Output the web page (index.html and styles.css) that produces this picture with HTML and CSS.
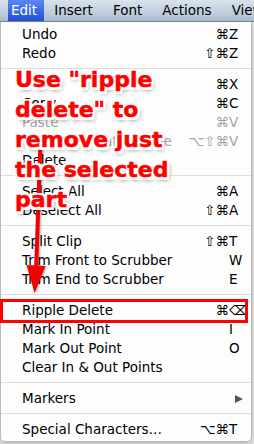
FILE: index.html
```html
<!DOCTYPE html>
<html lang="en">
<head>
    <meta charset="UTF-8">
    <title>Edit menu</title>
    <link rel="stylesheet" href="styles.css">
</head>
<body>
    <div class="menubar">
        <span class="title active">Edit</span>
        <span class="title">Insert</span>
        <span class="title">Font</span>
        <span class="title">Actions</span>
        <span class="title">View</span>
    </div>

    <div class="menu">
        <div class="item"><span>Undo</span><span class="keys"><span>⌘</span><span class="key">Z</span></span></div>
        <div class="item"><span>Redo</span><span class="keys"><span>⇧⌘</span><span class="key">Z</span></span></div>
        <div class="separator"></div>
        <div class="item"><span>Cut</span><span class="keys"><span>⌘</span><span class="key">X</span></span></div>
        <div class="item"><span>Copy</span><span class="keys"><span>⌘</span><span class="key">C</span></span></div>
        <div class="item disabled"><span>Paste</span><span class="keys"><span>⌘</span><span class="key">V</span></span></div>
        <div class="item disabled"><span>Paste and Match Style</span><span class="keys"><span>⌥⇧⌘</span><span class="key">V</span></span></div>
        <div class="item"><span>Delete</span></div>
        <div class="separator"></div>
        <div class="item"><span>Select All</span><span class="keys"><span>⌘</span><span class="key">A</span></span></div>
        <div class="item"><span>Deselect All</span><span class="keys"><span>⇧⌘</span><span class="key">A</span></span></div>
        <div class="separator"></div>
        <div class="item"><span>Split Clip</span><span class="keys"><span>⇧⌘</span><span class="key">T</span></span></div>
        <div class="item"><span>Trim Front to Scrubber</span><span class="keys"><span class="key">W</span></span></div>
        <div class="item"><span>Trim End to Scrubber</span><span class="keys"><span class="key">E</span></span></div>
        <div class="separator"></div>
        <div class="item"><span>Ripple Delete</span><span class="keys"><span>⌘</span><span class="key">⌫</span></span></div>
        <div class="item"><span>Mark In Point</span><span class="keys"><span class="key">I</span></span></div>
        <div class="item"><span>Mark Out Point</span><span class="keys"><span class="key">O</span></span></div>
        <div class="item"><span>Clear In &amp; Out Points</span></div>
        <div class="separator"></div>
        <div class="item"><span>Markers</span><span class="submenu"></span></div>
        <div class="separator"></div>
        <div class="item"><span>Special Characters…</span><span class="keys"><span>⌥⌘</span><span class="key">T</span></span></div>
    </div>

    <!-- annotation drawn on top of the screenshot -->
    <svg class="arrow" width="60" height="300" viewBox="0 0 60 300">
        <line x1="40.5" y1="140" x2="36.2" y2="268" stroke="#f20000" stroke-width="4"/>
        <polygon points="26.5,265 45.5,266 34.6,293" fill="#f20000"/>
    </svg>
    <div class="note">Use "ripple<br>delete" to<br>remove just<br>the selected<br>part</div>
    <div class="highlight"></div>
</body>
</html>
```

FILE: styles.css
```css
body {
    margin: 0;
    width: 254px;
    height: 444px;
    overflow: hidden;
    position: relative;
    background-color: #ececec;
    font-family: "DejaVu Sans", sans-serif;
    font-size: 13.5px;
    color: #000;
}

.menubar {
    display: flex;
    height: 21px;
    padding-left: 8px;
    border-bottom: 1px solid #7d8b99;
    background: linear-gradient(#d9e3ec, #adbfd1);
    white-space: nowrap;
    overflow: hidden;
}

.title {
    line-height: 21px;
    padding: 0 10px;
}

.title.active {
    padding: 0 7px 0 3px;
    color: #fff;
    background: linear-gradient(#5a89f2, #1f4fd8);
}

.menu {
    width: 252px;
    box-sizing: border-box;
    padding: 3px 0 2px;
    background-color: #fdfdfd;
    border: 1px solid #b9b9b9;
    border-top: none;
    border-radius: 0 0 5px 5px;
    box-shadow: 0 3px 8px rgba(0, 0, 0, 0.25);
}

.item {
    display: flex;
    justify-content: space-between;
    align-items: center;
    height: 19px;
    line-height: 19px;
    padding: 0 10px 0 21px;
    white-space: nowrap;
}

.item.disabled {
    color: #a3a3a3;
}

.keys {
    display: flex;
}

.key {
    width: 12px;
}

.submenu {
    width: 0;
    height: 0;
    margin-right: -2px;
    border-top: 4.5px solid transparent;
    border-bottom: 4.5px solid transparent;
    border-left: 8px solid #555;
}

.separator {
    height: 12px;
    position: relative;
}

.separator::after {
    content: "";
    position: absolute;
    left: 0;
    right: 0;
    top: 5px;
    border-top: 1px solid #dedede;
}

.arrow {
    position: absolute;
    left: 0;
    top: 0;
    filter: drop-shadow(1px 1px 1px rgba(0, 0, 0, 0.35));
}

.note {
    position: absolute;
    left: 15px;
    top: 65px;
    font-size: 22px;
    font-weight: bold;
    line-height: 30px;
    color: #ff0000;
    -webkit-text-stroke: 0.5px #ff0000;
    white-space: nowrap;
    text-shadow:
        -2.5px -2.5px 0 #fff, 2.5px -2.5px 0 #fff, -2.5px 2.5px 0 #fff, 2.5px 2.5px 0 #fff,
        0 -2.5px 0 #fff, 0 2.5px 0 #fff, -2.5px 0 0 #fff, 2.5px 0 0 #fff,
        2px 3px 4px rgba(0, 0, 0, 0.55);
}

.highlight {
    position: absolute;
    left: 0;
    top: 299px;
    width: 248px;
    height: 24px;
    box-sizing: border-box;
    border: 3px solid #f00;
}
```
